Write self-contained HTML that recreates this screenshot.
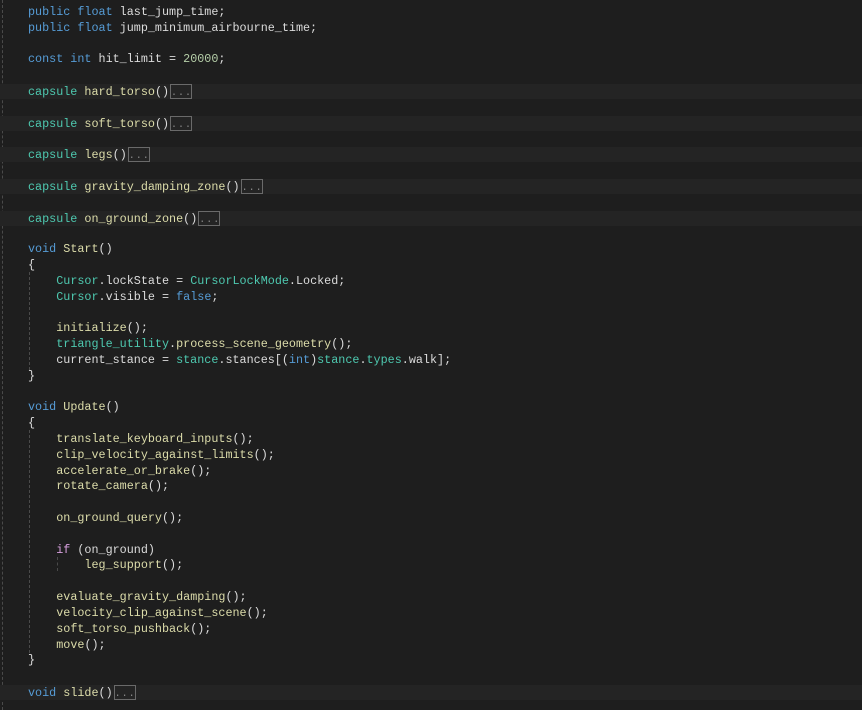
<!DOCTYPE html>
<html><head><meta charset="utf-8"><style>
html,body{margin:0;padding:0;background:#1e1e1e;width:862px;height:710px;overflow:hidden}
.code{position:absolute;left:28px;top:5px;font-family:"Liberation Mono",monospace;font-size:11.75px;color:#dcdcdc}
.l{height:15.82px;line-height:15.82px;position:relative;white-space:pre}
.k{color:#569cd6}.t{color:#4ec9b0}.f{color:#dcdcaa}.n{color:#b5cea8}.p{color:#d8a0df}
.c{display:inline-block;box-sizing:border-box;border:1px solid #6a6a6a;color:#8a8a8a;width:22px;height:15px;line-height:17px;vertical-align:-4px;font-size:10px;letter-spacing:1px;text-align:center;margin-left:1px;overflow:hidden}
.band{position:absolute;left:0;width:862px;height:15px;background:#242424}
.guide{position:absolute;width:0;border-left:1px dashed #4a4a4a}
</style></head><body>
<div class="guide" style="left:2px;top:0;height:710px"></div>
<div class="band" style="top:84px"></div>
<div class="band" style="top:116px"></div>
<div class="band" style="top:147px"></div>
<div class="band" style="top:179px"></div>
<div class="band" style="top:211px"></div>
<div class="band" style="top:685px"></div>
<div class="guide" style="left:29px;top:272px;height:98px"></div>
<div class="guide" style="left:29px;top:430px;height:223px"></div>
<div class="guide" style="left:57px;top:557px;height:14px"></div>
<div class="code"><div class="l"><span class="k">public float</span> last_jump_time;</div><div class="l"><span class="k">public float</span> jump_minimum_airbourne_time;</div><div class="l"> </div><div class="l"><span class="k">const int</span> hit_limit = <span class="n">20000</span>;</div><div class="l"> </div><div class="l"><span class="t">capsule</span> <span class="f">hard_torso</span>()<span class="c">...</span></div><div class="l"> </div><div class="l"><span class="t">capsule</span> <span class="f">soft_torso</span>()<span class="c">...</span></div><div class="l"> </div><div class="l"><span class="t">capsule</span> <span class="f">legs</span>()<span class="c">...</span></div><div class="l"> </div><div class="l"><span class="t">capsule</span> <span class="f">gravity_damping_zone</span>()<span class="c">...</span></div><div class="l"> </div><div class="l"><span class="t">capsule</span> <span class="f">on_ground_zone</span>()<span class="c">...</span></div><div class="l"> </div><div class="l"><span class="k">void</span> <span class="f">Start</span>()</div><div class="l">{</div><div class="l">    <span class="t">Cursor</span>.lockState = <span class="t">CursorLockMode</span>.Locked;</div><div class="l">    <span class="t">Cursor</span>.visible = <span class="k">false</span>;</div><div class="l"> </div><div class="l">    <span class="f">initialize</span>();</div><div class="l">    <span class="t">triangle_utility</span>.<span class="f">process_scene_geometry</span>();</div><div class="l">    current_stance = <span class="t">stance</span>.stances[(<span class="k">int</span>)<span class="t">stance</span>.<span class="t">types</span>.walk];</div><div class="l">}</div><div class="l"> </div><div class="l"><span class="k">void</span> <span class="f">Update</span>()</div><div class="l">{</div><div class="l">    <span class="f">translate_keyboard_inputs</span>();</div><div class="l">    <span class="f">clip_velocity_against_limits</span>();</div><div class="l">    <span class="f">accelerate_or_brake</span>();</div><div class="l">    <span class="f">rotate_camera</span>();</div><div class="l"> </div><div class="l">    <span class="f">on_ground_query</span>();</div><div class="l"> </div><div class="l">    <span class="p">if</span> (on_ground)</div><div class="l">        <span class="f">leg_support</span>();</div><div class="l"> </div><div class="l">    <span class="f">evaluate_gravity_damping</span>();</div><div class="l">    <span class="f">velocity_clip_against_scene</span>();</div><div class="l">    <span class="f">soft_torso_pushback</span>();</div><div class="l">    <span class="f">move</span>();</div><div class="l">}</div><div class="l"> </div><div class="l"><span class="k">void</span> <span class="f">slide</span>()<span class="c">...</span></div></div>
</body></html>
